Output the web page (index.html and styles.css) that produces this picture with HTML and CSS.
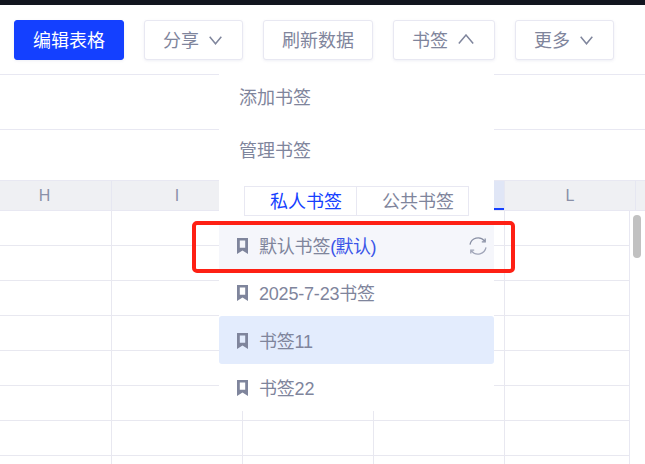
FILE: index.html
```html
<!DOCTYPE html>
<html lang="zh-CN">
<head>
    <meta charset="UTF-8">
    <meta name="viewport" content="width=device-width, initial-scale=1.0">
    <title>书签</title>
    <link rel="stylesheet" href="styles.css">
</head>
<body>
    <div class="page">
        <div class="topbar"></div>

        <div class="toolbar">
            <button class="btn btn-primary">编辑表格</button>
            <button class="btn btn-menu">分享<svg class="chevron" width="13" height="9" viewBox="0 0 13 9"><path d="M.7.8l5.8 7 5.8-7"/></svg></button>
            <button class="btn">刷新数据</button>
            <button class="btn btn-open">书签<svg class="chevron chevron-up" width="16" height="10" viewBox="0 0 16 10"><path d="M.8 9.4L8 1l7.2 8.4"/></svg></button>
            <button class="btn btn-menu">更多<svg class="chevron" width="13" height="9" viewBox="0 0 13 9"><path d="M.7.8l5.8 7 5.8-7"/></svg></button>
        </div>

        <div class="filter-row"></div>

        <div class="sheet">
            <div class="sheet-head">
                <div class="col col-first">H</div>
                <div class="col">I</div>
                <div class="col"></div>
                <div class="col col-active"></div>
                <div class="col">L</div>
                <div class="col col-end"></div>
            </div>
            <div class="sheet-body"></div>
            <div class="scrollbar"><div class="scroll-thumb"></div></div>
        </div>

        <div class="dropdown">
            <div class="menu-item">添加书签</div>
            <div class="menu-item">管理书签</div>

            <div class="tabs">
                <div class="tab tab-active">私人书签</div>
                <div class="tab">公共书签</div>
            </div>

            <div class="mark mark-default">
                <svg class="mark-icon" width="11" height="16" viewBox="0 0 11 16"><path fill-rule="evenodd" d="M0 0h11v16L5.5 12.5 0 16zM2.8 2.4v7.4h5.4V2.4z"/></svg>
                <span>默认书签<span class="mark-tag">(默认)</span></span>
                <svg class="mark-sync" width="18" height="18" viewBox="0 0 18 18"><path class="sync-top" d="M1 7.6A8.2 8.2 0 0 1 15.4 3.9M16.2 1.4v3.4h-3.4"/><path class="sync-bottom" d="M17 10.4A8.2 8.2 0 0 1 2.6 14.1M1.8 16.6v-3.4h3.4"/></svg>
            </div>
            <div class="mark">
                <svg class="mark-icon" width="11" height="16" viewBox="0 0 11 16"><path fill-rule="evenodd" d="M0 0h11v16L5.5 12.5 0 16zM2.8 2.4v7.4h5.4V2.4z"/></svg>
                <span>2025-7-23书签</span>
            </div>
            <div class="mark mark-selected">
                <svg class="mark-icon" width="11" height="16" viewBox="0 0 11 16"><path fill-rule="evenodd" d="M0 0h11v16L5.5 12.5 0 16zM2.8 2.4v7.4h5.4V2.4z"/></svg>
                <span>书签11</span>
            </div>
            <div class="mark">
                <svg class="mark-icon" width="11" height="16" viewBox="0 0 11 16"><path fill-rule="evenodd" d="M0 0h11v16L5.5 12.5 0 16zM2.8 2.4v7.4h5.4V2.4z"/></svg>
                <span>书签22</span>
            </div>
        </div>

        <div class="highlight"></div>
    </div>
</body>
</html>
```

FILE: styles.css
```css
body {
    font-family: "Liberation Sans", "Noto Sans CJK SC", sans-serif;
    margin: 0;
    padding: 0;
    background-color: #fff;
    color: #7f859c;
    font-size: 18px;
}

.page {
    position: relative;
    width: 645px;
    height: 464px;
    overflow: hidden;
}

.topbar {
    height: 5px;
    background-color: #12151f;
}

.toolbar {
    display: flex;
    gap: 20px;
    height: 70px;
    padding: 15px 14px 0;
    box-sizing: border-box;
    border-bottom: 1px solid #e8e8f2;
}

.btn {
    display: flex;
    align-items: center;
    height: 40px;
    padding: 0 18px 2px;
    background: #fff;
    border: 1px solid #e8e8f2;
    border-radius: 3px;
    box-shadow: 0 1px 3px rgba(90, 100, 160, 0.1);
    color: inherit;
    font-family: inherit;
    font-size: 18px;
    white-space: nowrap;
}

.btn-primary {
    background-color: #1440ff;
    border-color: #1440ff;
    color: #fff;
}

.btn-menu {
    padding-right: 20px;
}

.btn-open {
    padding: 0 20px 2px 18px;
}

.chevron {
    margin-left: 10px;
    margin-top: 2px;
    fill: none;
    stroke: #7f859c;
    stroke-width: 1.5;
}

.chevron-up {
    margin-top: 0;
}

.filter-row {
    height: 54px;
    border-bottom: 1px solid #e8e8f2;
}

.sheet {
    position: relative;
    margin-top: 50px;
}

.sheet-head {
    display: grid;
    grid-template-columns: 112px repeat(4, 131px) 9px;
    height: 31px;
    box-sizing: border-box;
    border-top: 1px solid #e8e8f2;
    border-bottom: 1px solid #e8e8f2;
    background-color: #eff0f3;
    color: #8a90a8;
    font-size: 16px;
}

.col {
    display: flex;
    align-items: center;
    justify-content: center;
    border-right: 1px solid #e6e7f1;
    box-sizing: border-box;
}

.col-first {
    padding-right: 22px;
}

.col-active {
    background-color: #e0e6f6;
    box-shadow: inset 0 -2px 0 #1440ff;
}

.col-end {
    border-right: none;
}

.sheet-body {
    height: 253px;
    background-image:
        linear-gradient(#e8e8f0 1px, transparent 1px),
        linear-gradient(90deg, #e8e8f0 1px, transparent 1px);
    background-size: 100% 35px, 131px 100%;
    background-position: 0 34px, 111px 0;
}

.scrollbar {
    position: absolute;
    top: 31px;
    right: 0;
    width: 16px;
    height: 253px;
    background-color: #fff;
    border-left: 1px solid #e8e8f2;
    box-sizing: border-box;
}

.scroll-thumb {
    width: 8px;
    height: 43px;
    margin: 4px 0 0 3px;
    border-radius: 4px;
    background-color: #c1c1c1;
}

.dropdown {
    position: absolute;
    top: 66px;
    left: 219px;
    width: 275px;
    padding-top: 3px;
    height: 342px;
    background-color: #fff;
}

.menu-item {
    display: flex;
    align-items: center;
    height: 53px;
    padding-left: 20px;
}

.tabs {
    display: flex;
    margin: 11px 0 5px 25px;
}

.tab {
    width: 113px;
    height: 30px;
    box-sizing: border-box;
    border: 1px solid #e8e8f2;
    text-align: center;
    line-height: 31px;
    padding-left: 11px;
}

.tab + .tab {
    width: 112px;
    border-left: none;
}

.tab-active {
    color: #1440ff;
}

.mark {
    display: flex;
    align-items: center;
    height: 47.5px;
    padding: 0 7px 0 18px;
    font-size: 18px;
    letter-spacing: -0.2px;
}

.mark-default {
    background-color: #f5f6fb;
}

.mark-selected {
    background-color: #e3ecfd;
    border-radius: 3px;
}

.mark-icon {
    flex-shrink: 0;
    margin-top: 2px;
    margin-right: 11px;
    fill: #7f859c;
}

.mark-tag {
    color: #3a55e8;
    letter-spacing: -0.6px;
}

.mark-sync {
    margin-left: auto;
    margin-top: 2px;
    fill: none;
    stroke-width: 1.3;
}

.sync-top {
    stroke: #8a90a5;
}

.sync-bottom {
    stroke: #a0a5b8;
}

.highlight {
    position: absolute;
    top: 221px;
    left: 192px;
    width: 323px;
    height: 52px;
    box-sizing: border-box;
    border: 4px solid #fe2014;
    border-radius: 5px;
}
```
